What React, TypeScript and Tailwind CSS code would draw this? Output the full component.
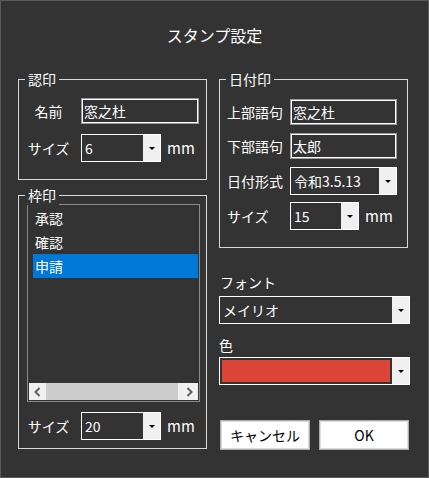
import type { ReactNode } from 'react';

const Tri = () => (
  <span className="h-0 w-0 border-x-[3px] border-t-[3px] border-x-transparent border-t-black" />
);

function Group({ label, className, children }: { label: string; className: string; children: ReactNode }) {
  return (
    <div className={`relative border border-[#d8d8d8] ${className}`}>
      <span className="absolute left-[6px] top-[-11px] bg-[#333333] px-[3px] text-[14px] leading-[20px] text-white">
        {label}
      </span>
      {children}
    </div>
  );
}

function TextBox({ value, className }: { value: string; className: string }) {
  return (
    <div className={`flex h-[26px] items-center border border-[#9a9a9a] pl-[2px] text-[14px] text-white shadow-[inset_0_0_0_1px_#ffffff] ${className}`}>
      {value}
    </div>
  );
}

function Combo({ value, className }: { value: ReactNode; className: string }) {
  return (
    <div className={`flex h-[28px] border border-white ${className}`}>
      <div className="flex flex-1 items-center pl-[3px] text-[14px] text-white">{value}</div>
      <div className="flex w-[17px] items-center justify-center bg-[#f0f0f0]">
        <Tri />
      </div>
    </div>
  );
}

export default function App() {
  const items = ['承認', '確認', '申請'];

  return (
    <div className="h-[478px] w-[429px] border border-[#5a5a5a] bg-[#333333] font-['Noto_Sans_CJK_JP','Noto_Sans',sans-serif] text-white">
      <h1 className="mt-[22px] text-center text-[16px] leading-[24px]">スタンプ設定</h1>

      <div className="mt-[32px] flex gap-[12px] pl-[17px]">
        {/* 左列 */}
        <div className="w-[189px]">
          <Group label="認印" className="pt-[18px] pb-[17px]">
            <div className="flex items-center text-[14px] leading-[20px]">
              <span className="ml-[8px] mr-[11px] w-[43px] text-center">名前</span>
              <TextBox value="窓之杜" className="w-[118px]" />
            </div>
            <div className="mt-[10px] flex items-center text-[14px] leading-[20px]">
              <span className="ml-[8px] mr-[11px] w-[43px] text-center">サイズ</span>
              <Combo value="6" className="w-[80px]" />
              <span className="ml-[6px] text-[15px]">mm</span>
            </div>
          </Group>

          <Group label="枠印" className="mt-[15px] pt-[8px] pb-[8px]">
            <div className="ml-[8px] flex h-[198px] w-[173px] flex-col border border-[#8a8a8a]">
              <div className="flex-1 pt-[1px]">
                {items.map((it) => (
                  <div
                    key={it}
                    className={`ml-[5px] mr-[1px] h-[24px] pl-[2px] text-[14px] leading-[24px] ${it === '申請' ? 'bg-[#0078d7]' : ''}`}
                  >
                    {it}
                  </div>
                ))}
              </div>
              <div className="mx-[1px] mb-[1px] flex h-[17px] bg-[#f0f0f0]">
                <div className="flex w-[17px] items-center justify-center">
                  <svg width="7" height="10" viewBox="0 0 7 10">
                    <path d="M5.5 1 L1.5 5 L5.5 9" fill="none" stroke="#606060" strokeWidth="2" />
                  </svg>
                </div>
                <div className="mr-[3px] flex-1 bg-[#cdcdcd]" />
                <div className="flex w-[17px] items-center justify-center">
                  <svg width="7" height="10" viewBox="0 0 7 10">
                    <path d="M1.5 1 L5.5 5 L1.5 9" fill="none" stroke="#606060" strokeWidth="2" />
                  </svg>
                </div>
              </div>
            </div>
            <div className="mt-[10px] flex items-center text-[14px] leading-[20px]">
              <span className="ml-[8px] mr-[11px] w-[43px] text-center">サイズ</span>
              <Combo value="20" className="w-[80px]" />
              <span className="ml-[6px] text-[15px]">mm</span>
            </div>
          </Group>
        </div>

        {/* 右列 */}
        <div className="w-[191px]">
          <Group label="日付印" className="w-[189px] pt-[19px] pb-[17px]">
            <div className="flex items-center pl-[7px] text-[14px] leading-[20px]">
              <span className="w-[63px]">上部語句</span>
              <TextBox value="窓之杜" className="w-[107px]" />
            </div>
            <div className="mt-[8px] flex items-center pl-[7px] text-[14px] leading-[20px]">
              <span className="w-[63px]">下部語句</span>
              <TextBox value="太郎" className="w-[107px]" />
            </div>
            <div className="mt-[8px] flex items-center pl-[7px] text-[14px] leading-[20px]">
              <span className="w-[63px]">日付形式</span>
              <Combo value="令和3.5.13" className="h-[27px] w-[107px]" />
            </div>
            <div className="mt-[7px] flex items-center pl-[7px] text-[14px] leading-[20px]">
              <span className="w-[63px]">サイズ</span>
              <Combo value="15" className="w-[69px]" />
              <span className="ml-[6px] text-[15px]">mm</span>
            </div>
          </Group>

          <div className="ml-[1px] mt-[24px] text-[14px] leading-[20px]">フォント</div>
          <Combo value="メイリオ" className="mt-[4px] w-[191px]" />

          <div className="mt-[11px] text-[14px] leading-[20px]">色</div>
          <div className="mt-[2px] flex h-[28px] w-[191px] border border-white">
            <div className="my-[2px] ml-[2px] mr-[2px] flex-1 bg-[#db4437]" />
            <div className="flex w-[17px] items-center justify-center bg-[#f0f0f0]">
              <Tri />
            </div>
          </div>

          <div className="ml-[1px] mt-[35px] flex gap-[9px]">
            <button className="h-[30px] w-[90px] border border-[#adadad] bg-white text-[14px] text-black shadow-[inset_0_0_0_1px_#dcdcdc]">
              キャンセル
            </button>
            <button className="h-[30px] w-[90px] border border-[#adadad] bg-white text-[14px] text-black shadow-[inset_0_0_0_1px_#dcdcdc]">
              OK
            </button>
          </div>
        </div>
      </div>
    </div>
  );
}
